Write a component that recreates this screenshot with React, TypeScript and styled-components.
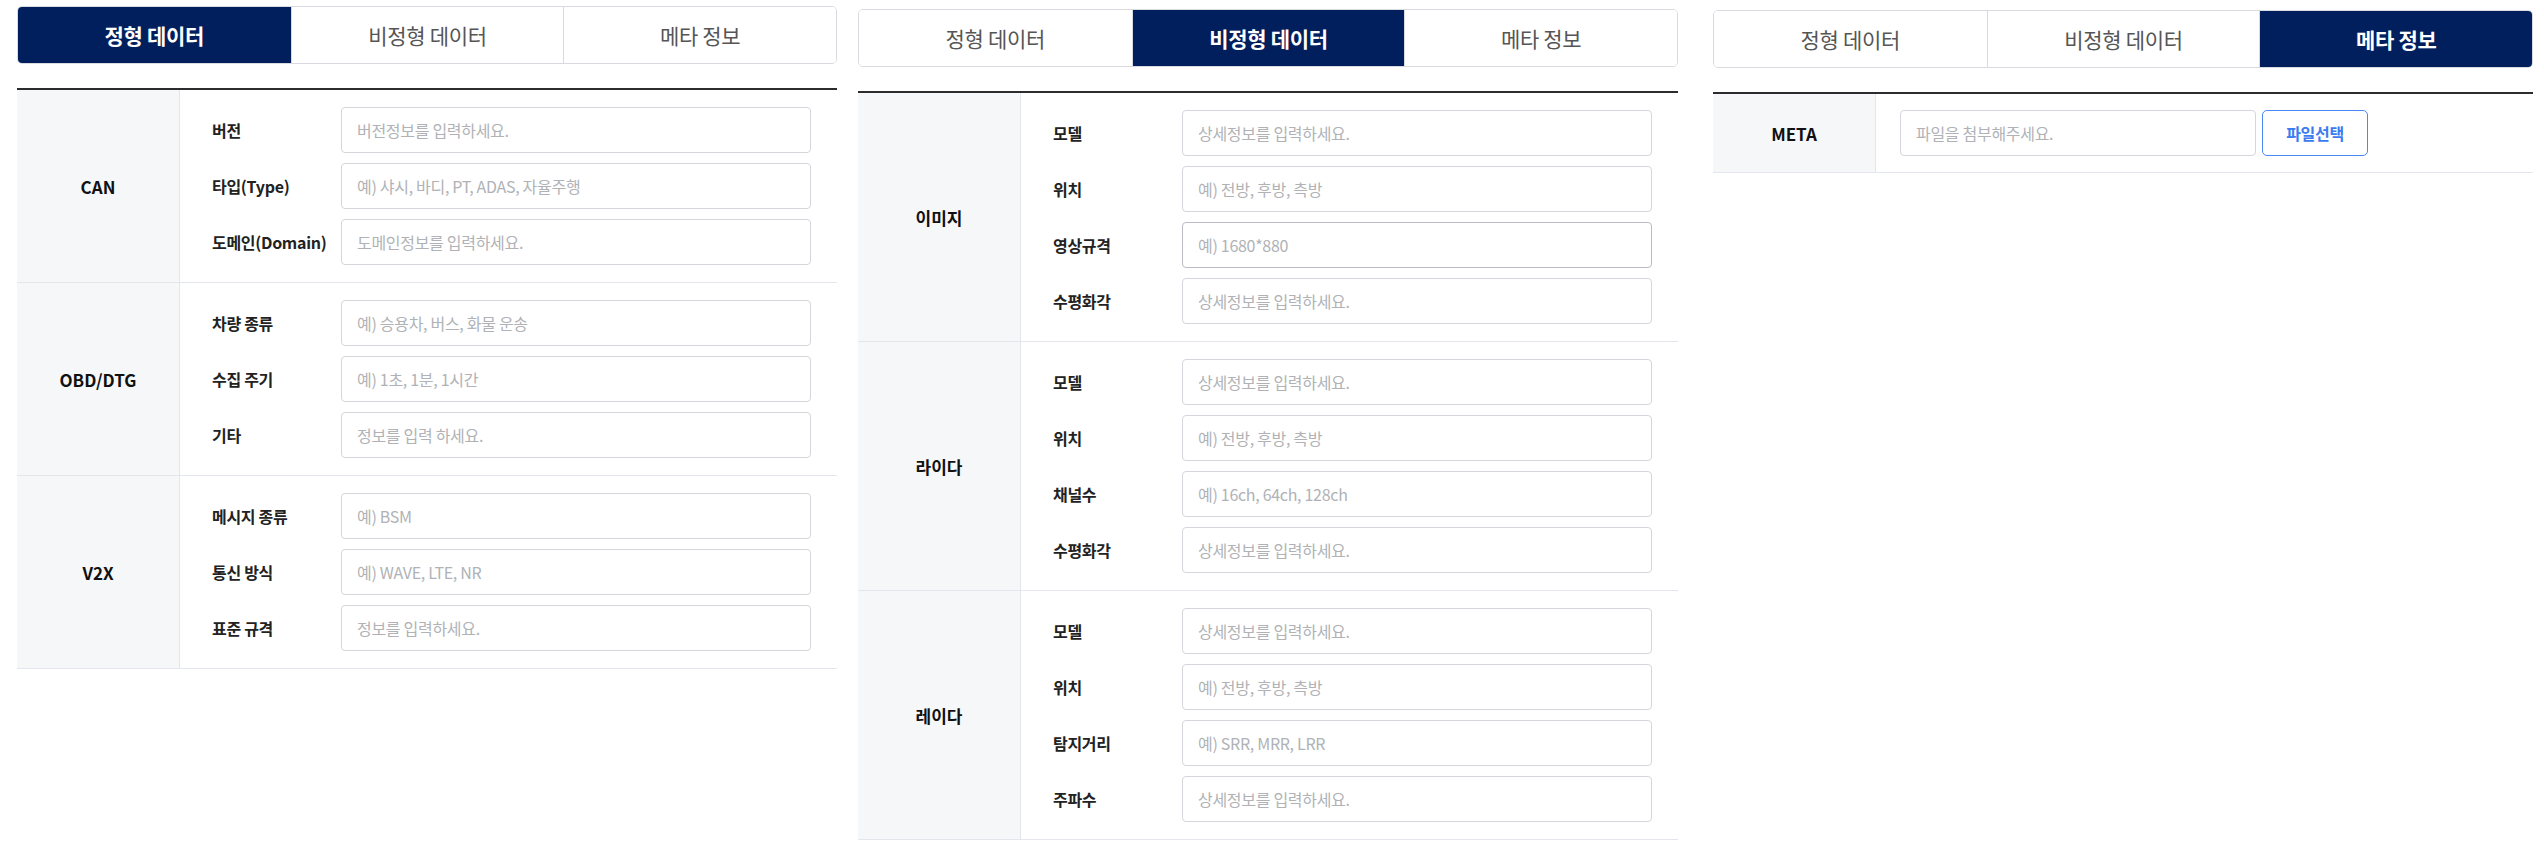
import React from "react";
import styled, { createGlobalStyle } from "styled-components";

const GlobalStyle = createGlobalStyle`
  html, body {
    margin: 0;
    padding: 0;
    background: #ffffff;
  }
  body {
    font-family: "Noto Sans CJK KR", "Noto Sans", sans-serif;
    color: #222;
  }
  * { box-sizing: border-box; }
`;

const Page = styled.div`
  display: flex;
  align-items: flex-start;
  padding-left: 17px;
`;

const Panel = styled.section<{ $mt: number; $ml: number }>`
  width: 820px;
  flex: 0 0 820px;
  margin-top: ${(p) => p.$mt}px;
  margin-left: ${(p) => p.$ml}px;
`;

const TabBar = styled.div`
  display: grid;
  grid-template-columns: repeat(3, 1fr);
  height: 58px;
  border: 1px solid #d8dadf;
  border-radius: 5px;
  overflow: hidden;
`;

const Tab = styled.button<{ $active: boolean }>`
  appearance: none;
  border: none;
  margin: 0;
  padding: 0;
  border-left: 1px solid #d8dadf;
  &:first-child { border-left: none; }
  background: ${(p) => (p.$active ? "#021f5d" : "#ffffff")};
  color: ${(p) => (p.$active ? "#ffffff" : "#555555")};
  font-family: "Noto Sans CJK KR", "Noto Sans", sans-serif;
  font-size: 21px;
  font-weight: ${(p) => (p.$active ? 700 : 400)};
  letter-spacing: -0.3px;
  cursor: pointer;
`;

const Table = styled.div`
  margin-top: 24px;
  border-top: 2px solid #2c2c2e;
`;

const Row = styled.div`
  display: grid;
  grid-template-columns: 163px 1fr;
  border-bottom: 1px solid #e3e6ec;
`;

const Head = styled.div`
  background: #f6f7f9;
  border-right: 1px solid #e3e6ec;
  display: flex;
  align-items: center;
  justify-content: center;
  font-size: 17px;
  font-weight: 700;
  color: #111;
`;

const Fields = styled.div`
  display: flex;
  flex-direction: column;
  gap: 10px;
  padding: 17px 26px 17px 32px;
`;

const Field = styled.div`
  display: grid;
  grid-template-columns: 129px 1fr;
  align-items: center;
`;

const Label = styled.label`
  font-size: 16px;
  font-weight: 700;
  color: #222;
  letter-spacing: -0.3px;
  white-space: nowrap;
`;

const TextInput = styled.input<{ $w?: number; $focused?: boolean }>`
  height: 46px;
  width: ${(p) => (p.$w ? `${p.$w}px` : "100%")};
  border: 1px solid ${(p) => (p.$focused ? "#b9bcc2" : "#d4d6db")};
  border-radius: 4px;
  padding: 0 15px;
  font-family: "Noto Sans CJK KR", "Noto Sans", sans-serif;
  font-size: 16px;
  color: #222;
  background: #fff;
  outline: none;
  &::placeholder {
    color: #b0b2b6;
    letter-spacing: -0.3px;
  }
`;

const FileLine = styled.div`
  display: flex;
  align-items: center;
  gap: 6px;
  padding: 16px 0 16px 24px;
`;

const FileButton = styled.button`
  height: 46px;
  width: 106px;
  border: 1.5px solid #4a89f3;
  border-radius: 5px;
  background: #fff;
  color: #3b7bef;
  font-family: "Noto Sans CJK KR", "Noto Sans", sans-serif;
  font-size: 16px;
  font-weight: 700;
  letter-spacing: -0.3px;
  cursor: pointer;
`;

const TABS = ["정형 데이터", "비정형 데이터", "메타 정보"];

type FieldDef = { label: string; ph: string; focused?: boolean };
type Group = { name: string; fields: FieldDef[] };

const structured: Group[] = [
  {
    name: "CAN",
    fields: [
      { label: "버전", ph: "버전정보를 입력하세요." },
      { label: "타입(Type)", ph: "예) 샤시, 바디, PT, ADAS, 자율주행" },
      { label: "도메인(Domain)", ph: "도메인정보를 입력하세요." },
    ],
  },
  {
    name: "OBD/DTG",
    fields: [
      { label: "차량 종류", ph: "예) 승용차, 버스, 화물 운송" },
      { label: "수집 주기", ph: "예) 1초, 1분, 1시간" },
      { label: "기타", ph: "정보를 입력 하세요." },
    ],
  },
  {
    name: "V2X",
    fields: [
      { label: "메시지 종류", ph: "예) BSM" },
      { label: "통신 방식", ph: "예) WAVE, LTE, NR" },
      { label: "표준 규격", ph: "정보를 입력하세요." },
    ],
  },
];

const DETAIL = "상세정보를 입력하세요.";
const POS = "예) 전방, 후방, 측방";

const unstructured: Group[] = [
  {
    name: "이미지",
    fields: [
      { label: "모델", ph: DETAIL },
      { label: "위치", ph: POS },
      { label: "영상규격", ph: "예) 1680*880", focused: true },
      { label: "수평화각", ph: DETAIL },
    ],
  },
  {
    name: "라이다",
    fields: [
      { label: "모델", ph: DETAIL },
      { label: "위치", ph: POS },
      { label: "채널수", ph: "예) 16ch, 64ch, 128ch" },
      { label: "수평화각", ph: DETAIL },
    ],
  },
  {
    name: "레이다",
    fields: [
      { label: "모델", ph: DETAIL },
      { label: "위치", ph: POS },
      { label: "탐지거리", ph: "예) SRR, MRR, LRR" },
      { label: "주파수", ph: DETAIL },
    ],
  },
];

function Tabs({ active }: { active: number }) {
  return (
    <TabBar>
      {TABS.map((t, i) => (
        <Tab key={t} $active={i === active}>
          {t}
        </Tab>
      ))}
    </TabBar>
  );
}

function GroupTable({ groups }: { groups: Group[] }) {
  return (
    <Table>
      {groups.map((g) => (
        <Row key={g.name}>
          <Head>{g.name}</Head>
          <Fields>
            {g.fields.map((f) => (
              <Field key={f.label}>
                <Label>{f.label}</Label>
                <TextInput placeholder={f.ph} $focused={f.focused} />
              </Field>
            ))}
          </Fields>
        </Row>
      ))}
    </Table>
  );
}

export default function App() {
  return (
    <>
      <GlobalStyle />
      <Page>
        <Panel $mt={6} $ml={0}>
          <Tabs active={0} />
          <GroupTable groups={structured} />
        </Panel>
        <Panel $mt={9} $ml={21}>
          <Tabs active={1} />
          <GroupTable groups={unstructured} />
        </Panel>
        <Panel $mt={10} $ml={35}>
          <Tabs active={2} />
          <Table>
            <Row>
              <Head>META</Head>
              <FileLine>
                <TextInput $w={356} placeholder="파일을 첨부해주세요." />
                <FileButton>파일선택</FileButton>
              </FileLine>
            </Row>
          </Table>
        </Panel>
      </Page>
    </>
  );
}
